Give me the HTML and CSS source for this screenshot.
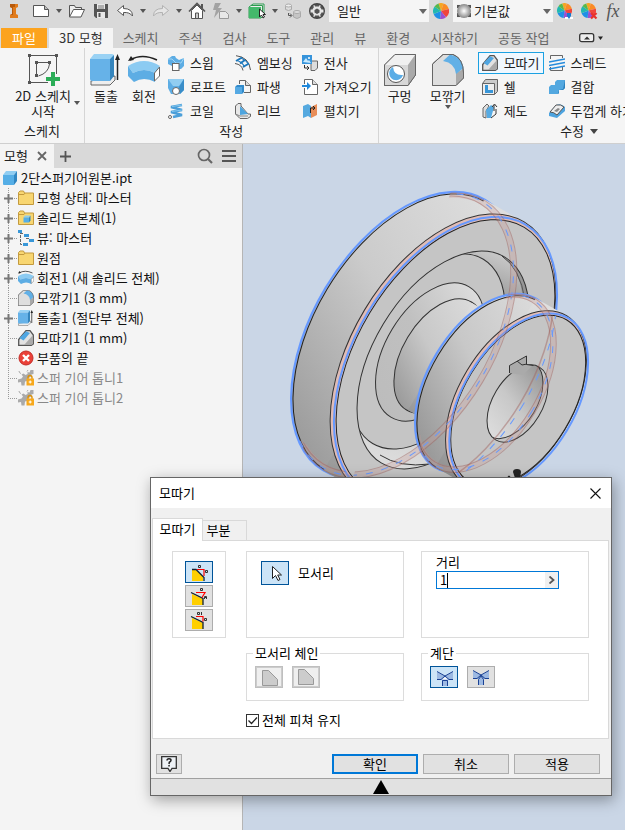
FILE: index.html
```html
<!DOCTYPE html>
<html lang="ko">
<head>
    <meta charset="UTF-8">
    <meta name="viewport" content="width=device-width, initial-scale=1.0">
    <title>2단스퍼기어원본.ipt</title>
    <link rel="stylesheet" href="styles.css">
</head>
<body>
    <!-- Shared icons -->
    <svg class="sprite" aria-hidden="true">
        <symbol id="caret" viewBox="0 0 6 4"><path d="M0 0h6L3 4z" fill="#555"/></symbol>
        <symbol id="wheel" viewBox="0 0 16 16">
            <path d="M8 8L5.500 .4A8 8 0 0 1 10.500 .4z" fill="#f5a623"/>
            <path d="M8 8L10.500 .4A8 8 0 0 1 15.800 6z" fill="#fb8b24"/>
            <path d="M8 8L15.800 6A8 8 0 0 1 13 14.200z" fill="#f0453c"/>
            <path d="M8 8L13 14.200A8 8 0 0 1 7 16z" fill="#9b4fd0"/>
            <path d="M8 8L7 16A8 8 0 0 1 .6 11z" fill="#1e90e6"/>
            <path d="M8 8L.6 11A8 8 0 0 1 1.500 3.400z" fill="#22b8b0"/>
            <path d="M8 8L1.500 3.400A8 8 0 0 1 5.500 .4z" fill="#58b84a"/>
        </symbol>
        <symbol id="folder" viewBox="0 0 16 16">
            <path d="M.5 14.500V2.500L2 1h3.500l1 2h9v11.500z" fill="#f8d671" stroke="#c39a3e"/>
            <path d="M1 4.500h5l1-1.500" fill="none" stroke="#c39a3e"/>
        </symbol>
        <symbol id="cube" viewBox="0 0 16 16">
            <path d="M1 5l3-4h11l-3 4z" fill="#8fcdf2"/>
            <path d="M1 5h11v10H2q-1 0-1-1z" fill="#55aee6"/>
            <path d="M12 5l3-4v10l-3 4z" fill="#2f86c2"/>
        </symbol>
        <symbol id="extrude" viewBox="0 0 32 32">
            <path d="M1 27v4h19l5-5v-4z" fill="#eee" stroke="#666"/>
            <path d="M0 5l4-5h18q2 0 2 2l-4 3z" fill="#9ad2f4"/>
            <path d="M0 5h20v22H2q-2 0-2-2z" fill="#66b2e8"/>
            <path d="M20 5l4-4v21l-4 5z" fill="#3585bd"/>
            <path d="M27.500 26V4" stroke="#222" stroke-width="1.500"/><path d="M27.500 0l2.500 6h-5z" fill="#222"/>
        </symbol>
        <symbol id="revolve" viewBox="0 0 32 32">
            <path d="M2 6Q14-1 29 6" fill="none" stroke="#222" stroke-width="1.500"/><path d="M0 7l3-5 3 4z" fill="#222"/>
            <path d="M0 12Q16 2 32 12l-5 7q-11-6-22 0z" fill="#8ccbf2"/>
            <path d="M0 12l5 7q11-6 22 0v9q-11-6-21 0l-6-6z" fill="#5dade4"/>
            <path d="M26.500 19l5-6v9l-5 5z" fill="#fff" stroke="#666"/>
        </symbol>
        <symbol id="fillet" viewBox="0 0 32 32">
            <path d="M.5 10L11 .5h10Q31 4 31.500 19v5l-7.500 7.500H.5z" fill="#dedede" stroke="#666"/>
            <path d="M24 31V19l7.500-4v9z" fill="#a9a9a9"/>
            <path d="M11 7L18 .5Q30 3 31.500 14L24 20Q23 9 11 7z" fill="#62b0e6"/>
            <path d="M.5 10L11 .5h10Q31 4 31.500 19v5l-7.500 7.500H.5z" fill="none" stroke="#666"/>
        </symbol>
        <symbol id="chamfer" viewBox="0 0 16 16">
            <path d="M.7 9.500L8 .7h4L15.300 5v9l-2 1.300H.7z" fill="#e2e2e2" stroke="#555" stroke-width="1.300"/>
            <path d="M7 14l8-9v9l-2 1H6z" fill="#aaa"/>
            <path d="M1.500 8L8 1.200l4 1.800-6.500 7.500z" fill="#4fa6e2"/>
        </symbol>
        <symbol id="gear" viewBox="0 0 16 16">
            <path d="M15.500 0v4l-2 .5-1 2.500-3 1.500L9 11l-2 .5-.5 4H3.500L3 12l-3 .5v-3l3.500-1 1.500-2-1.500-2 2-1 2 1.500 2-1V2l2 .5L12.500 0z" fill="#aaa"/>
            <path d="M1 1q0 2 2 2.500M10 0l-1 1.500" fill="none" stroke="#aaa"/>
            <path d="M10 9V7.500q0-2 2-2t2 2V9" fill="none" stroke="#d9900a" stroke-width="1.400"/>
            <rect x="8.500" y="8.500" width="7.500" height="7" fill="#f7a81b"/><path d="M12.200 10.500v3M10.700 12h3" stroke="#fff"/>
        </symbol>
        <symbol id="node-plus" viewBox="0 0 18 20">
            <path d="M8.500 0v6M8.500 15v5M14 10.500h4" stroke="#999" stroke-dasharray="1 1"/>
            <path d="M4 10.500h9M8.500 6v9" stroke="#777" stroke-width="2"/>
        </symbol>
        <symbol id="node-leaf" viewBox="0 0 18 20">
            <path d="M8.500 0v20M10 10.500h8" stroke="#999" stroke-dasharray="1 1"/>
        </symbol>
        <symbol id="node-last" viewBox="0 0 18 20">
            <path d="M8.500 0v11M10 10.500h8" stroke="#999" stroke-dasharray="1 1"/>
        </symbol>
    </svg>

    <!-- Quick access bar -->
    <header class="quick-bar">
        <button class="quick logo" aria-label="Inventor"><svg viewBox="0 0 29 22"><path d="M10 4h8v3l-2 1v6l2 1v3h-8v-3l2-1V8l-2-1z" fill="#e07b1c"/><path d="M10 4h5v3h-2v8h-3l2-1V8l-2-1z" fill="#b85a0b"/></svg></button>
        <button class="quick" aria-label="새로 만들기"><svg viewBox="0 0 24 22"><path d="M4.500 5.500h11l4 4v7h-15z" fill="#fff" stroke="#555"/><path d="M15.500 5.500v4h4" fill="#bbb" stroke="#555"/></svg></button>
        <button class="more" aria-label="새로 만들기 메뉴"><svg><use href="#caret"/></svg></button>
        <button class="quick" aria-label="열기"><svg viewBox="0 0 24 22"><path d="M4.500 17V5.500h5l1 2h6v3" fill="#eee" stroke="#555"/><path d="M4.500 17l4-7.500h11L16 17z" fill="#fff" stroke="#555"/></svg></button>
        <button class="quick" aria-label="저장"><svg viewBox="0 0 24 22"><path d="M5 4h14v14H7l-2-2z" fill="#555"/><path d="M8 4h8v5H8zM8 12h8v6H8z" fill="#e8e8e8"/><path d="M9 6h6M9 8h6" stroke="#777"/><path d="M9.500 13h2v4h-2z" fill="#555"/></svg></button>
        <button class="quick" aria-label="실행 취소"><svg viewBox="0 0 24 22"><path d="M4.500 10.500l6-5v3q9 0 9 7.500-3-4-9-3.500v3z" fill="#fff" stroke="#555"/></svg></button>
        <button class="more" aria-label="실행 취소 목록"><svg><use href="#caret"/></svg></button>
        <button class="quick" aria-label="다시 실행" disabled><svg viewBox="0 0 24 22"><path d="M19.500 10.500l-6-5v3q-9 0-9 7.500 3-4 9-3.500v3z" fill="#e5e5e5" stroke="#b2b2b2"/></svg></button>
        <button class="more" aria-label="다시 실행 목록"><svg><use href="#caret"/></svg></button>
        <button class="quick" aria-label="홈"><svg viewBox="0 0 24 22"><path d="M6.500 10.500v8h11v-8L12 5z" fill="#fff" stroke="#555"/><path d="M4 11.500L12 3.500l8 8" fill="none" stroke="#555" stroke-width="1.700"/><path d="M16 4h2v4h-2z" fill="#555"/><path d="M10.500 18v-5h3v5" fill="#ccc" stroke="#555"/></svg></button>
        <button class="quick" aria-label="업데이트"><svg viewBox="0 0 24 22"><path d="M6 3h6l-3 5h4l-8 10 2-8H4z" fill="#a3a3a3"/><path d="M10.500 11.500h6l3 3v4h-9z" fill="#e8e8e8" stroke="#999"/></svg></button>
        <button class="more" aria-label="업데이트 메뉴"><svg><use href="#caret"/></svg></button>
        <button class="quick" aria-label="선택"><svg viewBox="0 0 24 22"><path d="M4 7l4-3h11v11l-3 3H4z" fill="#eee" stroke="#2d9a50"/><path d="M4 7h12v11H4z" fill="#43b96b"/><path d="M6 5.500h11.500V17" fill="none" stroke="#2d9a50"/><path d="M14.500 9v8l2-2 1.500 3 1.500-1-1.500-2.500h2.500z" fill="#fff" stroke="#222"/></svg></button>
        <button class="more" aria-label="선택 메뉴"><svg><use href="#caret"/></svg></button>
        <button class="quick" aria-label="재지정"><svg viewBox="0 0 24 22"><path d="M4.500 5.500v4q3 2 6 0v-4" fill="#ddd" stroke="#aaa"/><ellipse cx="7.500" cy="5.500" rx="3" ry="1.500" fill="#eee" stroke="#aaa"/><path d="M12.500 12v5q3.500 3 7 0v-5" fill="#c5c5c5" stroke="#aaa"/><ellipse cx="16" cy="12" rx="3.500" ry="1.500" fill="#ddd" stroke="#aaa"/><path d="M7.500 13v2.500h3M9 13.500l2 2-2 2" fill="none" stroke="#555"/></svg></button>
        <button class="quick" aria-label="재질"><svg viewBox="0 0 24 22"><circle cx="12" cy="11" r="7.500" fill="#e6e6e6"/><path d="M12 8.500l2.500 1.500v2.500L12 14l-2.500-1.500V10zM9 4h6l-1 2.500h-4zM9 18h6l-1-2.500h-4zM5 8l2.500-3 1.500 2-2 3zM19 8l-2.500-3L15 7l2 3zM5 14l2.500 3L9 15l-2-3zM19 14l-2.500 3-1.500-2 2-3z" fill="#555"/><circle cx="12" cy="11" r="7.300" fill="none" stroke="#444" stroke-width="1.400"/></svg></button>
        <select class="quick-select" aria-label="재질 선택"><option>일반</option></select>
        <button class="quick" aria-label="모양"><svg viewBox="-4 -3 24 22"><use href="#wheel" width="16" height="16"/></svg></button>
        <span class="select-box">
            <svg viewBox="0 0 16 16"><defs><radialGradient id="ball"><stop offset="0" stop-color="#fff"/><stop offset="1" stop-color="#888"/></radialGradient></defs><path d="M1 1h14v14H1z" fill="#eee"/><path d="M1 2h3v3H1zM12 2h3v3h-3zM1 10h3v4H1zM12 10h3v4h-3z" fill="#555"/><circle cx="8" cy="8" r="7" fill="url(#ball)"/></svg>
            <select class="quick-select" aria-label="모양 선택"><option>기본값</option></select>
        </span>
        <button class="quick" aria-label="모양 조정"><svg viewBox="-4 -3 24 22"><use href="#wheel" width="15" height="15"/><path d="M8 15h8" stroke="#fff" stroke-width="2"/><path d="M10 10h4v3l-2 3-2-3z" fill="#1879d0"/></svg></button>
        <button class="quick" aria-label="모양 지우기"><svg viewBox="-4 -3 24 22"><use href="#wheel" width="15" height="15"/><path d="M10 10l5.500 5.500M15.500 10L10 15.500" stroke="#e8322c" stroke-width="2.200"/></svg></button>
        <button class="quick fx" aria-label="매개변수"><i>fx</i></button>
    </header>

    <!-- Ribbon tabs -->
    <nav class="tabs">
        <a class="tab file" href="#">파일</a>
        <a class="tab active" href="#">3D 모형</a>
        <a class="tab" href="#">스케치</a>
        <a class="tab" href="#">주석</a>
        <a class="tab" href="#">검사</a>
        <a class="tab" href="#">도구</a>
        <a class="tab" href="#">관리</a>
        <a class="tab" href="#">뷰</a>
        <a class="tab" href="#">환경</a>
        <a class="tab" href="#">시작하기</a>
        <a class="tab" href="#">공동 작업</a>
        <button class="collapse" aria-label="리본 최소화"><svg viewBox="0 0 25 10"><rect x=".7" y=".7" width="14" height="8" rx="2" fill="#eee" stroke="#333" stroke-width="1.300"/><path d="M5 6.500l3-3 3 3z" fill="#333"/><path d="M19 3.500h5l-2.500 3.500z" fill="#222"/></svg></button>
    </nav>

    <!-- Ribbon -->
    <section class="ribbon">
        <div class="panel sketch-panel">
            <div class="panel-body">
                <button class="big sketch">
                    <svg viewBox="0 0 32 32"><path d="M1.500 2v26M3 1.500h24M28.500 3v17M2 28.500h18" stroke="#555"/><path d="M0 0h3v3H0zM27 0h3v3h-3zM0 27h3v3H0zM7 7h3v3H7zM20 7h3v3h-3zM7 20h3v3H7z" fill="#555"/><path d="M8.500 10v10M10 8.500h10M21.500 10q-1 9-11 12" fill="none" stroke="#555"/><path d="M18 25h14M25 18v14" stroke="#2bad57" stroke-width="4"/></svg>
                    <span>2D 스케치<br>시작</span>
                    <svg class="drop"><use href="#caret"/></svg>
                </button>
            </div>
            <div class="panel-title">스케치</div>
        </div>
        <div class="panel create-panel">
            <div class="panel-body">
                <button class="big"><svg><use href="#extrude"/></svg><span>돌출</span></button>
                <button class="big"><svg><use href="#revolve"/></svg><span>회전</span></button>
                <div class="tools">
                    <button class="tool"><svg viewBox="0 0 16 16"><path d="M0 4l4-3h3l1 2 3 2 5-2v8l-3 3h-2V9H4v2L0 9z" fill="#5dade4"/><path d="M0 4h4l4 4h5l3-5" fill="none" stroke="#a0d6f6"/><rect x="4.500" y="8.500" width="6.500" height="7" fill="#fff" stroke="#666"/></svg>스윕</button>
                    <button class="tool"><svg viewBox="0 0 16 16"><path d="M0 0h16v11l-4 4H3L0 9z" fill="#5dade4"/><path d="M0 0h16l-5 7H5z" fill="#91cdf1"/><path d="M11 8l5-8v11l-4 4z" fill="#398dc8"/><circle cx="8" cy="12" r="3.500" fill="#fff" stroke="#666"/></svg>로프트</button>
                    <button class="tool"><svg viewBox="0 0 16 16"><path d="M14 2L3 4l11 3L3 9l11 3-9 2" fill="none" stroke="#4b9fd9" stroke-width="2.600"/><path d="M14 2L4 3.500M14 7L4 8.500" stroke="#85c8f0"/><circle cx="2" cy="14" r="1.500" fill="#fff" stroke="#666"/></svg>코일</button>
                    <button class="tool"><svg viewBox="0 0 16 16"><path d="M1 .7Q14 2 15.500 15M0 8.500q7 1 8 7" fill="none" stroke="#555"/><path d="M1 6l6-3.500M5 8.500L10 5M8 12l6-3.500" stroke="#1c78bd" stroke-width="2"/><path d="M2 5.500q6 2 7.500 6.500M6 3q5 2 7.500 6" fill="none" stroke="#1c78bd" stroke-width="1.200"/></svg>엠보싱</button>
                    <button class="tool"><svg viewBox="0 0 16 16"><path d="M4.500 5V1.500h6l5 5v7H9" fill="#f5f5f5" stroke="#666"/><path d="M10.500 1.500v5h5" fill="#ddd" stroke="#666"/><path d="M0 8h7v7H0z" fill="#55a9e3"/><path d="M0 8l2-2h7L7 8zM7 8l2-2v7l-2 2z" fill="#318aca"/></svg>파생</button>
                    <button class="tool"><svg viewBox="0 0 16 16"><path d="M.5 11V3L3 .5h3V3l7 8h2.500v2.500l-3 2H5z" fill="#e8e8e8" stroke="#666"/><path d="M5 3l8 8-8 1z" fill="#4ea5df"/><path d="M.5 11L5 13h8" fill="none" stroke="#888"/></svg>리브</button>
                    <button class="tool"><svg viewBox="0 0 16 16"><path d="M9 6h6.500v7L13 15.500H9z" fill="#ddd" stroke="#666"/><path d="M0 0h10v9H0z" fill="#3794db"/><path d="M1 7l3-4 2 3 1-1 2 3z" fill="#c8eaff"/><circle cx="7" cy="3" r="1" fill="#fff"/><path d="M2.500 10v3H6M5 11l2 2-2 2" fill="none" stroke="#333"/></svg>전사</button>
                    <button class="tool"><svg viewBox="0 0 16 16"><path d="M2.500 5V.5h8l5 5v10h-13V9" fill="#fff" stroke="#666"/><path d="M10.500.5v5h5" fill="#ddd" stroke="#666"/><path d="M0 6h5V3l4 4-4 4V8H0z" fill="#1f88db"/></svg>가져오기</button>
                    <button class="tool"><svg viewBox="0 0 16 16"><path d="M1 3l5-2v12l-5 2zM6 1l3 2v12l-3-2z" fill="#55a9df"/><path d="M9 4l6-3v11l-6 3z" fill="#e88d58"/><path d="M8.500 10V5h4M11 3l2 2-2 2" fill="none" stroke="#222"/></svg>펼치기</button>
                </div>
            </div>
            <div class="panel-title">작성</div>
        </div>
        <div class="panel modify-panel">
            <div class="panel-body">
                <button class="big hole"><svg viewBox="0 0 32 32"><path d="M.5 11L11 .5h20.500V21L24 31.500H.5z" fill="#d7d7d7" stroke="#666"/><path d="M.5 11L11 .5h20.500L24 11z" fill="#f0f0f0"/><path d="M24 11L31.500.5V21L24 31.500z" fill="#aaa"/><path d="M.5 11L11 .5h20.500V21L24 31.500H.5z" fill="none" stroke="#666"/><circle cx="12" cy="20" r="8.500" fill="#fff" stroke="#555"/><path d="M9 13q1 9 10 8a7 7 0 1 1-10-8z" fill="#5bade6"/></svg><span>구멍</span></button>
                <button class="big round"><svg><use href="#fillet"/></svg><span>모깎기</span><svg class="drop"><use href="#caret"/></svg></button>
                <div class="tools">
                    <button class="tool selected"><svg><use href="#chamfer"/></svg>모따기</button>
                    <button class="tool"><svg viewBox="0 0 16 16"><path d="M.5 4.500l3-4h12v12l-3 3H.5z" fill="#ccc" stroke="#666"/><path d="M.5 4.500h12v11H.5z" fill="#eee" stroke="#666"/><path d="M3 6h3v5h5v3H3z" fill="#3896d8"/></svg>쉘</button>
                    <button class="tool"><svg viewBox="0 0 16 16"><path d="M1 14V5l4-4 2 2-3 5v7z" fill="#ddd" stroke="#666"/><path d="M4 7l5-5 3 2-3 11H5z" fill="#57abe3"/><path d="M9 15l5-4V6M12 8V2M10 4l2.500-3L15 4" fill="none" stroke="#333"/></svg>제도</button>
                    <button class="tool"><svg viewBox="0 0 16 16"><path d="M1.500 4V.5h12V3M1.500 12v3.500h12V11" fill="none" stroke="#666"/><path d="M0 7l16-3M0 10.500l16-3M0 14l16-3" stroke="#258bdc" stroke-width="1.500"/></svg>스레드</button>
                    <button class="tool"><svg viewBox="0 0 16 16"><path d="M0 8l2-2h4V3l2-2h8v8l-2 2h-4v3l-1 1H0z" fill="#53a8e0"/><path d="M10 11l4-1 2-9v8l-2 2h-4v3l-1 1z" fill="#2d82bd"/></svg>결합</button>
                    <button class="tool"><svg viewBox="0 0 16 16"><path d="M0 10l7-8q5-2 9 2v4l-8 7-8-2z" fill="#4da3df"/><path d="M1 9l6-7q5-1 8 2l-7 8q-3-3-7-3z" fill="#eee" stroke="#555"/><path d="M5 8l4-3 2 1-3 3z" fill="#888"/></svg>두껍게 하기</button>
                </div>
            </div>
            <div class="panel-title">수정 <svg viewBox="0 0 8 5"><path d="M0 0h8L4 5z" fill="#444"/></svg></div>
        </div>
    </section>

    <main class="workspace">
        <!-- Model browser -->
        <aside class="browser">
            <div class="browser-head">
                <div class="browser-tab">모형 <button aria-label="닫기"><svg viewBox="0 0 10 10"><path d="M1 1l8 8M9 1L1 9" stroke="#666" stroke-width="1.800"/></svg></button></div>
                <button class="add" aria-label="추가"><svg viewBox="0 0 11 11"><path d="M0 5.500h11M5.500 0v11" stroke="#555" stroke-width="1.800"/></svg></button>
                <button class="find" aria-label="검색"><svg viewBox="0 0 16 16"><circle cx="7" cy="7" r="5.500" fill="none" stroke="#666" stroke-width="1.700"/><path d="M11 11l4 4" stroke="#666" stroke-width="2.200"/></svg></button>
                <button class="menu" aria-label="메뉴"><svg viewBox="0 0 14 12"><path d="M0 1h14M0 6h14M0 11h14" stroke="#555" stroke-width="2"/></svg></button>
            </div>
            <ul class="tree">
                <li class="root"><svg class="icon"><use href="#cube"/></svg>2단스퍼기어원본.ipt</li>
                <li><svg class="node"><use href="#node-plus"/></svg><svg class="icon"><use href="#folder"/></svg>모형 상태: 마스터</li>
                <li><svg class="node"><use href="#node-plus"/></svg><svg class="icon" viewBox="0 0 16 16"><use href="#folder"/><use href="#cube" x="5" y="5" width="8" height="8"/></svg>솔리드 본체(1)</li>
                <li><svg class="node"><use href="#node-plus"/></svg><svg class="icon" viewBox="0 0 16 16"><path d="M5 3.500H2.500v11H5M2.500 1v3M8 8.500h3" fill="none" stroke="#666" stroke-dasharray="3 1"/><path d="M0 0h4v3H0zM6 4h5v3H6zM11 9h5v3h-5zM5 13h5v3H5z" fill="#3897d8"/></svg>뷰: 마스터</li>
                <li><svg class="node"><use href="#node-plus"/></svg><svg class="icon"><use href="#folder"/></svg>원점</li>
                <li><svg class="node"><use href="#node-plus"/></svg><svg class="icon"><use href="#revolve"/></svg>회전1 (새 솔리드 전체)</li>
                <li><svg class="node"><use href="#node-leaf"/></svg><svg class="icon"><use href="#fillet"/></svg>모깎기1 (3 mm)</li>
                <li><svg class="node"><use href="#node-plus"/></svg><svg class="icon"><use href="#extrude"/></svg>돌출1 (절단부 전체)</li>
                <li><svg class="node"><use href="#node-leaf"/></svg><svg class="icon"><use href="#chamfer"/></svg>모따기1 (1 mm)</li>
                <li><svg class="node"><use href="#node-leaf"/></svg><svg class="icon" viewBox="0 0 16 16"><circle cx="8" cy="8" r="7" fill="#ea4038" stroke="#c32c27"/><path d="M5 5l6 6M11 5l-6 6" stroke="#fff" stroke-width="2.400"/></svg>부품의 끝</li>
                <li class="off"><svg class="node"><use href="#node-leaf"/></svg><svg class="icon"><use href="#gear"/></svg>스퍼 기어 톱니1</li>
                <li class="off"><svg class="node"><use href="#node-last"/></svg><svg class="icon"><use href="#gear"/></svg>스퍼 기어 톱니2</li>
            </ul>
        </aside>

        <!-- 3D view: stepped gear blank, two discs on one hub -->
        <section class="view">
            <svg class="model" viewBox="243 144 382 686" preserveAspectRatio="xMinYMin slice" role="img" aria-label="2단 스퍼 기어">
                <defs>
                    <linearGradient id="rim" gradientUnits="userSpaceOnUse" x1="450" y1="190" x2="310" y2="480"><stop offset="0" stop-color="#dedede"/><stop offset=".45" stop-color="#cbcbcb"/><stop offset="1" stop-color="#949494"/></linearGradient>
                    <linearGradient id="rim2" gradientUnits="userSpaceOnUse" x1="540" y1="300" x2="430" y2="470"><stop offset="0" stop-color="#dfdfdf"/><stop offset=".5" stop-color="#c8c8c8"/><stop offset="1" stop-color="#8e8e8e"/></linearGradient>
                    <linearGradient id="hub" gradientUnits="userSpaceOnUse" x1="470" y1="305" x2="405" y2="415"><stop offset="0" stop-color="#dcdcdc"/><stop offset=".5" stop-color="#c8c8c8"/><stop offset="1" stop-color="#929292"/></linearGradient>
                    <linearGradient id="fill" gradientUnits="userSpaceOnUse" x1="460" y1="283" x2="385" y2="415"><stop offset="0" stop-color="#dedede"/><stop offset=".5" stop-color="#c0c0c0"/><stop offset="1" stop-color="#bcbcbc"/></linearGradient>
                    <linearGradient id="wall" gradientUnits="userSpaceOnUse" x1="480" y1="250" x2="400" y2="465"><stop offset="0" stop-color="#c5c5c5"/><stop offset=".2" stop-color="#959595"/><stop offset=".6" stop-color="#c2c2c2"/><stop offset="1" stop-color="#dcdcdc"/></linearGradient>
                    <linearGradient id="bore" gradientUnits="userSpaceOnUse" x1="530" y1="365" x2="500" y2="440"><stop offset="0" stop-color="#999"/><stop offset=".5" stop-color="#c8c8c8"/><stop offset="1" stop-color="#dedede"/></linearGradient>
                    <clipPath id="recess"><ellipse cx="443" cy="360" rx="69.700" ry="120" transform="rotate(31 443 360)"/></clipPath>
                    <clipPath id="hole"><ellipse cx="517.500" cy="403.500" rx="24.700" ry="42.500" transform="rotate(31 517.500 403.500)"/></clipPath>
                    <clipPath id="backHalf"><path d="M455 180H620V490H300V440L353 477z"/></clipPath>
                    <clipPath id="smallHalf"><path d="M517 280H620V490H420V430z"/></clipPath>
                    <clipPath id="smallDisc"><ellipse cx="518" cy="401" rx="54.500" ry="94.500" transform="rotate(31 518 401)"/></clipPath>
                </defs>

                <!-- large disc -->
                <ellipse cx="404" cy="335" rx="91.500" ry="157.600" transform="rotate(31 404 335)" fill="url(#rim)" stroke="#6699ff" stroke-width="2.200"/>
                <ellipse cx="404.500" cy="335.500" rx="90.200" ry="156" transform="rotate(31 404.500 335.500)" fill="none" stroke="#222"/>
                <path d="M484.500 199.500L524 222L363 493L323.500 470.500z" fill="url(#rim)"/>
                <ellipse cx="443" cy="357" rx="91.500" ry="157.600" transform="rotate(31 443 357)" fill="#e0bcb6" stroke="#333"/>
                <ellipse cx="445.500" cy="358.500" rx="88.500" ry="153" transform="rotate(31 445.500 358.500)" fill="#c5c5c5" stroke="#222"/>
                <ellipse cx="445.500" cy="358.500" rx="90.300" ry="156" transform="rotate(31 445.500 358.500)" fill="none" stroke="#6699ff" stroke-width="2"/>

                <!-- recess and hub -->
                <g clip-path="url(#recess)">
                    <path d="M350 240h190v240H350z" fill="url(#wall)"/>
                    <path d="M502 256Q520 268 525 300M380 455Q400 468 430 464" fill="none" stroke="#333"/>
                    <path d="M502 256Q520 268 523 300h8v-30z" fill="#777" fill-opacity=".5"/>
                    <ellipse cx="428" cy="351.400" rx="62.500" ry="107.500" transform="rotate(31 428 351.400)" fill="#c5c5c5" stroke="#333"/>
                </g>
                <ellipse cx="443" cy="360" rx="69.700" ry="120" transform="rotate(31 443 360)" fill="none" stroke="#333"/>
                <ellipse cx="430" cy="352" rx="44.200" ry="76" transform="rotate(31 430 352)" fill="url(#fill)" stroke="#333"/>
                <ellipse cx="439" cy="356" rx="36.500" ry="63" transform="rotate(31 439 356)" fill="url(#hub)" stroke="#333"/>
                <path d="M472 303L540 342L476 450L408 410z" fill="url(#hub)"/>

                <!-- small disc -->
                <ellipse cx="485.500" cy="383" rx="57.100" ry="98.300" transform="rotate(31 485.500 383)" fill="url(#rim2)" stroke="#6699ff" stroke-width="2.200"/>
                <ellipse cx="486.500" cy="384" rx="56.300" ry="97.300" transform="rotate(31 486.500 384)" fill="none" stroke="#222"/>
                <path d="M535.700 298.200L566.200 315.500L465.800 484.500L435.300 467.200z" fill="url(#rim2)"/>
                <ellipse cx="516" cy="400" rx="57.100" ry="98.300" transform="rotate(31 516 400)" fill="#e0bcb6" stroke="#333"/>
                <ellipse cx="518.200" cy="401" rx="54.500" ry="94.500" transform="rotate(31 518.200 401)" fill="#c5c5c5" stroke="#222"/>
                <ellipse cx="518.700" cy="401.500" rx="56.200" ry="97" transform="rotate(31 518.700 401.500)" fill="none" stroke="#6699ff" stroke-width="2"/>

                <!-- bore with keyway -->
                <g clip-path="url(#hole)">
                    <path d="M480 350h75v100h-75z" fill="#c5c5c5"/>
                    <ellipse cx="512.500" cy="400" rx="24.700" ry="42.500" transform="rotate(31 512.500 400)" fill="url(#bore)" stroke="#333"/>
                </g>
                <ellipse cx="517.500" cy="403.500" rx="24.700" ry="42.500" transform="rotate(31 517.500 403.500)" fill="none" stroke="#333"/>
                <path d="M509.500 373v-7.500l17-9.500v8.500l6 1L523 375z" fill="#aaa"/>
                <path d="M509.500 373v-7.500l17-9.500v8.500l7 1M517 361l5 4 5-1" fill="none" stroke="#333"/>

                <!-- hidden edges seen through the body -->
                <g fill="none" clip-path="url(#backHalf)">
                    <ellipse cx="404" cy="335" rx="89" ry="154" transform="rotate(31 404 335)" stroke="#c99a98" stroke-opacity=".3" stroke-width="5"/>
                    <ellipse cx="404.500" cy="335.500" rx="91" ry="157" transform="rotate(31 404.500 335.500)" stroke="#a0605c" stroke-opacity=".45"/>
                    <ellipse cx="402" cy="334" rx="88" ry="152" transform="rotate(31 402 334)" stroke="#a0605c" stroke-opacity=".45"/>
                    <ellipse cx="402.500" cy="334.500" rx="90" ry="155" transform="rotate(31 402.500 334.500)" stroke="#6699ff" stroke-dasharray="7 9"/>
                </g>
                <g fill="none" clip-path="url(#smallHalf)">
                    <ellipse cx="485" cy="382.500" rx="55.500" ry="95.500" transform="rotate(31 485 382.500)" stroke="#c99a98" stroke-opacity=".3" stroke-width="5"/>
                    <ellipse cx="486" cy="383.500" rx="57" ry="98" transform="rotate(31 486 383.500)" stroke="#a0605c" stroke-opacity=".45"/>
                    <ellipse cx="483.500" cy="382" rx="54.500" ry="93.500" transform="rotate(31 483.500 382)" stroke="#a0605c" stroke-opacity=".45"/>
                    <ellipse cx="484" cy="382.500" rx="56" ry="96" transform="rotate(31 484 382.500)" stroke="#6699ff" stroke-dasharray="7 9"/>
                </g>
                <g fill="none" clip-path="url(#smallDisc)">
                    <ellipse cx="443" cy="357" rx="90" ry="155" transform="rotate(31 443 357)" stroke="#a0605c" stroke-opacity=".45" stroke-width="1.500"/>
                    <ellipse cx="445.500" cy="358.500" rx="90.300" ry="156" transform="rotate(31 445.500 358.500)" stroke="#6699ff" stroke-dasharray="7 9"/>
                </g>
                <path d="M513 472a4 3 0 1 1 8 0l-1 6h-5zM507 478q2-5 4 0z" fill="#222"/>
            </svg>
        </section>
    </main>

    <!-- Chamfer dialog -->
    <form class="dialog" role="dialog" aria-labelledby="dialogTitle">
        <div class="title-bar">
            <span id="dialogTitle">모따기</span>
            <button type="button" aria-label="닫기"><svg viewBox="0 0 11 11"><path d="M.5.5l10 10M10.500.5l-10 10" stroke="#111" stroke-width="1.100"/></svg></button>
        </div>
        <div class="dialog-tabs">
            <button type="button" class="current">모따기</button>
            <button type="button">부분</button>
        </div>
        <div class="page">
            <div class="group modes">
                <button type="button" class="pick on" aria-label="거리"><svg viewBox="0 0 26 20"><path d="M6 8h4l7 7v4H6z" fill="#ffcf00"/><path d="M6 7.500h4l8 8V19" fill="none" stroke="#123" stroke-width="1.300"/><path d="M11 7.500h7V14" fill="none" stroke="#f00" stroke-width="1.200"/><path d="M12.500 3.500h2v2h-2zM19.500 8.500h2v2h-2z" fill="none" stroke="#333"/></svg></button>
                <button type="button" class="pick" aria-label="거리 및 각도"><svg viewBox="0 0 26 20"><path d="M6 8l11 5v6H6z" fill="#ffcf00"/><path d="M5 6.500l12 6V19" fill="none" stroke="#123" stroke-width="1.300"/><path d="M10 6.500h9l-3 5" fill="none" stroke="#f00" stroke-width="1.200"/><path d="M14.500 2.500h2v2h-2zM18.500 13v-2.500h2V13M18.500 11.500h2" fill="none" stroke="#333"/></svg></button>
                <button type="button" class="pick" aria-label="두 거리"><svg viewBox="0 0 26 20"><path d="M6 8l11 5v6H6z" fill="#ffcf00"/><path d="M5 6.500l12 6V19" fill="none" stroke="#123" stroke-width="1.300"/><path d="M10 6.500h7v5" fill="none" stroke="#f00" stroke-width="1.200"/><path d="M11.500 2.500h2v2h-2zM15.500 2v3M18.500 8.500h2v2h-2z" fill="none" stroke="#333"/></svg></button>
            </div>
            <div class="settings">
                <div class="group edges">
                    <button type="button" class="pick on" id="edgePick"><svg viewBox="0 0 26 22"><path d="M10.500 4.500v12l3-3 2.500 5 2-1-2.300-4.500h3.800z" fill="#fff" stroke="#222"/></svg></button>
                    <label for="edgePick">모서리</label>
                </div>
                <div class="group distance">
                    <label for="distance">거리</label>
                    <div class="value-box">
                        <input type="text" id="distance" value="1">
                        <span class="text-cursor"></span>
                        <button type="button" aria-label="값 목록"><svg viewBox="0 0 6 8"><path d="M.5.5l4 3.500-4 3.500" fill="none" stroke="#555" stroke-width="1.800"/></svg></button>
                    </div>
                </div>
                <fieldset>
                    <legend>모서리 체인</legend>
                    <button type="button" class="pick" disabled aria-label="접하는 모든 모서리"><svg viewBox="0 0 26 20"><path d="M6.500 3.500h6l9 9v6h-15z" fill="#ccc" stroke="#999"/></svg></button>
                    <button type="button" class="pick" disabled aria-label="단일 모서리"><svg viewBox="0 0 26 20"><path d="M5.500 2.500h6l9 9v6h-15z" fill="#ccc" stroke="#999"/></svg></button>
                </fieldset>
                <fieldset>
                    <legend>계단</legend>
                    <button type="button" class="pick on" aria-label="계단 적용"><svg viewBox="0 0 26 20"><path d="M6 5l8 4 8-4v7l-4 1h-1v6h-6v-6l-5-1z" fill="#9db9e2"/><path d="M6 4.500l8 4.500 8-4.500M6 12.500h4l4-3.500 4 3.500h4M11.500 19v-5.500h5V19" fill="none" stroke="#1a4194"/><path d="M11 12.500l3-2.500 3 2.500z" fill="#fff"/></svg></button>
                    <button type="button" class="pick" aria-label="계단 없음"><svg viewBox="0 0 26 20"><path d="M5 4l8 4 8-4v7l-5 1v6h-6v-6l-5-1z" fill="#9db9e2"/><path d="M5 3.500L13 8l8-4.500M5 11.500h4L13 8l4 3.500h4M10.500 18v-5.500L13 9l2.500 3.500V18" fill="none" stroke="#1a4194"/></svg></button>
                </fieldset>
                <div class="keep">
                    <input type="checkbox" id="keepAll" checked>
                    <label for="keepAll">전체 피쳐 유지</label>
                </div>
            </div>
        </div>
        <div class="actions">
            <button type="button" class="help" aria-label="도움말"><svg viewBox="0 0 16 16"><path d="M.7.7h14.600v11.600H11L9 15.500l-2-3.200H.7z" fill="#eef2f6" stroke="#333" stroke-width="1.300"/><path d="M6 4.500q0-1.800 2-1.800t2 1.600Q10 5.500 8.300 6.300L8 8" fill="none" stroke="#222" stroke-width="1.500"/><path d="M7.300 9h1.500v1.500H7.300z" fill="#222"/></svg></button>
            <button type="button" class="ok">확인</button>
            <button type="button">취소</button>
            <button type="button">적용</button>
        </div>
        <div class="expander"><svg viewBox="0 0 16 14"><path d="M8 0l8 14H0z"/></svg></div>
    </form>
</body>
</html>
```
FILE: styles.css
```css
* {
  box-sizing: border-box;
}
body {
  margin: 0;
  height: 100vh;
  display: flex;
  flex-direction: column;
  overflow: hidden;
  background-color: #d9d9d9;
  color: #222;
  font-family: "Noto Sans CJK KR", "Noto Sans", sans-serif;
  font-size: 13px;
  line-height: 16px;
}
button, input, select {
  font: inherit;
  color: inherit;
}
button {
  margin: 0;
  padding: 0;
  border: none;
  background: none;
  white-space: nowrap;
}
svg {
  display: block;
  flex-shrink: 0;
}
a {
  color: inherit;
  text-decoration: none;
}
.sprite {
  position: absolute;
  width: 0;
  height: 0;
}

/* quick access bar */
.quick-bar {
  display: flex;
  align-items: flex-start;
  height: 28px;
  flex-shrink: 0;
}
.quick, .quick svg {
  width: 24px;
  height: 22px;
  flex-shrink: 0;
}
.logo, .logo svg {
  width: 29px;
}
.more {
  width: 12px;
  height: 22px;
  flex-shrink: 0;
}
.more svg {
  width: 6px;
  height: 4px;
  margin: 0 auto;
}
.quick-select {
  width: 100px;
  height: 22px;
  padding: 0 8px;
  border: none;
  border-radius: 0;
  appearance: none;
  background: #f5f5f5 url("data:image/svg+xml,%3Csvg xmlns='http://www.w3.org/2000/svg' width='8' height='5'%3E%3Cpath d='M0 0h8L4 5z' fill='%23666'/%3E%3C/svg%3E") no-repeat right 2px center;
  flex-shrink: 0;
}
.select-box {
  display: flex;
  align-items: center;
  width: 100px;
  padding-left: 3px;
  background-color: #f5f5f5;
  flex-shrink: 0;
}
.select-box svg {
  width: 16px;
  height: 16px;
}
.select-box .quick-select {
  width: auto;
  flex: 1;
  padding: 0 2px;
}
.fx {
  font-family: "Liberation Serif", serif;
  font-size: 18px;
  line-height: 18px;
  color: #555;
}

/* ribbon tabs */
.tabs {
  display: flex;
  height: 20px;
  padding-left: 1px;
  flex-shrink: 0;
  color: #666;
}
.tab {
  padding: 0 10px;
  line-height: 20px;
  white-space: nowrap;
}
.tab.file {
  padding: 0 11px;
  margin-right: 2px;
  background-color: #fca31e;
  color: #fff;
}
.tab.active {
  background-color: #f5f5f5;
  color: #333;
}
.collapse {
  margin-left: 20px;
}
.collapse svg {
  width: 25px;
  height: 10px;
}

/* ribbon */
.ribbon {
  display: flex;
  height: 96px;
  flex-shrink: 0;
  overflow: hidden;
  background-color: #f5f5f5;
  border-bottom: 1px solid #cfcfcf;
}
.panel {
  display: flex;
  flex-direction: column;
  flex-shrink: 0;
  border-right: 1px solid #d5d5d5;
}
.panel-body {
  display: flex;
  height: 74px;
  padding: 4px 2px 0;
}
.panel-title {
  display: flex;
  justify-content: center;
  align-items: center;
  gap: 6px;
  height: 18px;
}
.panel-title svg {
  width: 8px;
  height: 5px;
}
.sketch-panel {
  width: 85px;
}
.modify-panel {
  width: 402px;
}
.modify-panel .panel-body {
  padding-left: 0;
}
.big {
  display: flex;
  flex-direction: column;
  align-items: center;
  gap: 2px;
  width: 38px;
  padding-top: 2px;
  line-height: 15px;
}
.big svg {
  width: 32px;
  height: 32px;
}
.big .drop {
  width: 6px;
  height: 4px;
}
.sketch {
  display: grid;
  grid-template-columns: 58px 6px;
  gap: 2px;
  justify-items: center;
  align-items: center;
  align-content: start;
  width: 80px;
  padding-left: 12px;
}
.sketch svg:first-child {
  grid-column: 1 / 3;
  justify-self: start;
  margin-left: 14px;
}
.hole {
  width: 42px;
}
.round {
  width: 54px;
}
.tools {
  display: grid;
  grid-template-rows: repeat(3, 22px);
  grid-auto-flow: column;
  grid-auto-columns: max-content;
  gap: 2px 1px;
  margin-left: 1px;
}
.modify-panel .tools {
  margin-left: 3px;
}
.tool {
  display: flex;
  align-items: center;
  gap: 6px;
  padding: 0 3px;
  border: 1px solid transparent;
}
.tool svg {
  width: 16px;
  height: 16px;
}
.tool.selected {
  background-color: #f0f8ff;
  border-color: #1ba1e2;
}

/* model browser */
.workspace {
  display: flex;
  flex: 1;
  min-height: 0;
}
.browser {
  width: 243px;
  flex-shrink: 0;
  background-color: #f4f4f4;
  border-right: 1px solid #b5b5b5;
}
.browser-head {
  display: flex;
  align-items: center;
  height: 24px;
  padding-right: 6px;
  background-color: #d9d9d9;
}
.browser-tab {
  display: flex;
  align-items: center;
  gap: 9px;
  width: 54px;
  height: 24px;
  padding-left: 4px;
  background-color: #f4f4f4;
}
.browser-tab svg {
  width: 10px;
  height: 10px;
}
.add {
  margin-left: 6px;
}
.add svg {
  width: 11px;
  height: 11px;
}
.find {
  margin-left: auto;
}
.find svg {
  width: 16px;
  height: 16px;
}
.menu {
  margin-left: 9px;
}
.menu svg {
  width: 14px;
  height: 12px;
}
.tree {
  margin: 0;
  padding: 0;
  list-style: none;
}
.tree li {
  display: flex;
  align-items: center;
  height: 20px;
  color: #111;
  white-space: nowrap;
}
.tree .root {
  padding-left: 2px;
}
.tree .off {
  color: #888;
}
.node {
  width: 18px;
  height: 20px;
}
.icon {
  width: 16px;
  height: 16px;
  margin-right: 3px;
}

/* 3D view */
.view {
  flex: 1;
  min-width: 0;
  background-color: #cad6e6;
}
.model {
  width: 100%;
  height: 100%;
}

/* dialog window */
.dialog {
  position: absolute;
  left: 150px;
  top: 477px;
  width: 462px;
  background-color: #f0f0f0;
  border: 1px solid #666;
  box-shadow: 2px 4px 14px rgba(0, 0, 0, 0.35);
  color: #000;
}
.title-bar {
  display: flex;
  align-items: center;
  justify-content: space-between;
  height: 30px;
  padding: 0 10px 0 8px;
  background-color: #fff;
}
.title-bar svg {
  width: 11px;
  height: 11px;
}
.dialog-tabs {
  display: flex;
  align-items: flex-end;
  height: 33px;
  margin: 0 2px 0 1px;
  box-shadow: inset 0 -1px #d9d9d9;
}
.dialog-tabs button {
  width: 44px;
  height: 21px;
  padding: 0 12px 1px 0;
  border: 1px solid #d9d9d9;
  border-left: none;
  background-color: #f0f0f0;
  text-align: center;
}
.dialog-tabs .current {
  width: 51px;
  height: 23px;
  padding: 0 0 2px;
  border-left: 1px solid #d9d9d9;
  border-bottom: none;
  background-color: #fff;
}
.page {
  display: flex;
  align-items: flex-start;
  gap: 20px;
  margin: 0 2px 0 1px;
  padding: 10px 19px;
  background-color: #fff;
  border: 1px solid #d9d9d9;
  border-top: none;
}
.group {
  height: 87px;
  border: 1px solid #dcdcdc;
}
.modes {
  display: flex;
  flex-direction: column;
  align-items: center;
  gap: 2px;
  width: 54px;
  padding-top: 9px;
}
.pick {
  width: 28px;
  height: 22px;
  border: 1px solid #adadad;
  background-color: #e1e1e1;
}
.pick svg {
  width: 26px;
  height: 20px;
}
.pick.on {
  border-color: #005499;
  background-color: #cce4f7;
}
.pick:disabled {
  border: 1px solid #bfbfbf;
  box-shadow: inset 0 0 0 1px #ccc;
  background-color: #efefef;
}
.settings {
  display: grid;
  grid-template-columns: 1fr 168px;
  gap: 7px 17px;
  flex: 1;
}
.edges {
  display: flex;
  align-items: flex-start;
  gap: 9px;
  padding: 9px 14px;
}
.edges .pick {
  height: 24px;
}
.edges svg {
  height: 22px;
}
.edges label {
  line-height: 24px;
}
.distance {
  padding: 1px 14px;
}
.distance label {
  display: block;
  line-height: 18px;
}
.value-box {
  display: flex;
  width: 123px;
  height: 18px;
  border: 1px solid #0078d7;
  background-color: #fff;
}
.value-box input {
  width: 10px;
  padding: 0 0 0 3px;
  border: none;
  outline: none;
  line-height: 16px;
}
.text-cursor {
  width: 1px;
  height: 15px;
  margin-top: 1px;
  background-color: #000;
}
.value-box button {
  display: grid;
  place-items: center;
  width: 13px;
  margin-left: auto;
  background-color: #f0f0f0;
}
.value-box svg {
  width: 6px;
  height: 8px;
}
fieldset {
  display: flex;
  align-items: flex-start;
  gap: 9px;
  height: 56px;
  min-width: 0;
  margin: 0;
  padding: 5px 8px;
  border: 1px solid #dcdcdc;
}
legend {
  margin-left: -2px;
  padding: 0 2px;
}
.keep {
  display: flex;
  align-items: center;
  gap: 3px;
  grid-column: 1 / 3;
  margin-top: 4px;
}
.keep input {
  appearance: none;
  width: 13px;
  height: 13px;
  margin: 0;
  border: 1px solid #333;
  background: #fff url("data:image/svg+xml,%3Csvg xmlns='http://www.w3.org/2000/svg' width='11' height='11'%3E%3Cpath d='M1.500 5.500l3 3 5.500-6' fill='none' stroke='%23222' stroke-width='1.300'/%3E%3C/svg%3E") no-repeat center;
}
.actions {
  display: flex;
  align-items: center;
  gap: 5px;
  height: 39px;
  padding: 10px 11px 0 5px;
}
.actions button {
  width: 86px;
  height: 20px;
  border: 1px solid #adadad;
  background-color: #e1e1e1;
  line-height: 16px;
}
.actions .ok {
  border: 2px solid #0078d7;
}
.actions .help {
  display: grid;
  place-items: center;
  width: 26px;
  margin-right: auto;
}
.help svg {
  width: 16px;
  height: 16px;
}
.expander {
  display: flex;
  justify-content: center;
  align-items: center;
  height: 17px;
  border-top: 1px solid #a0a0a0;
  background-color: #e1e1e1;
}
.expander svg {
  width: 16px;
  height: 14px;
}
```
